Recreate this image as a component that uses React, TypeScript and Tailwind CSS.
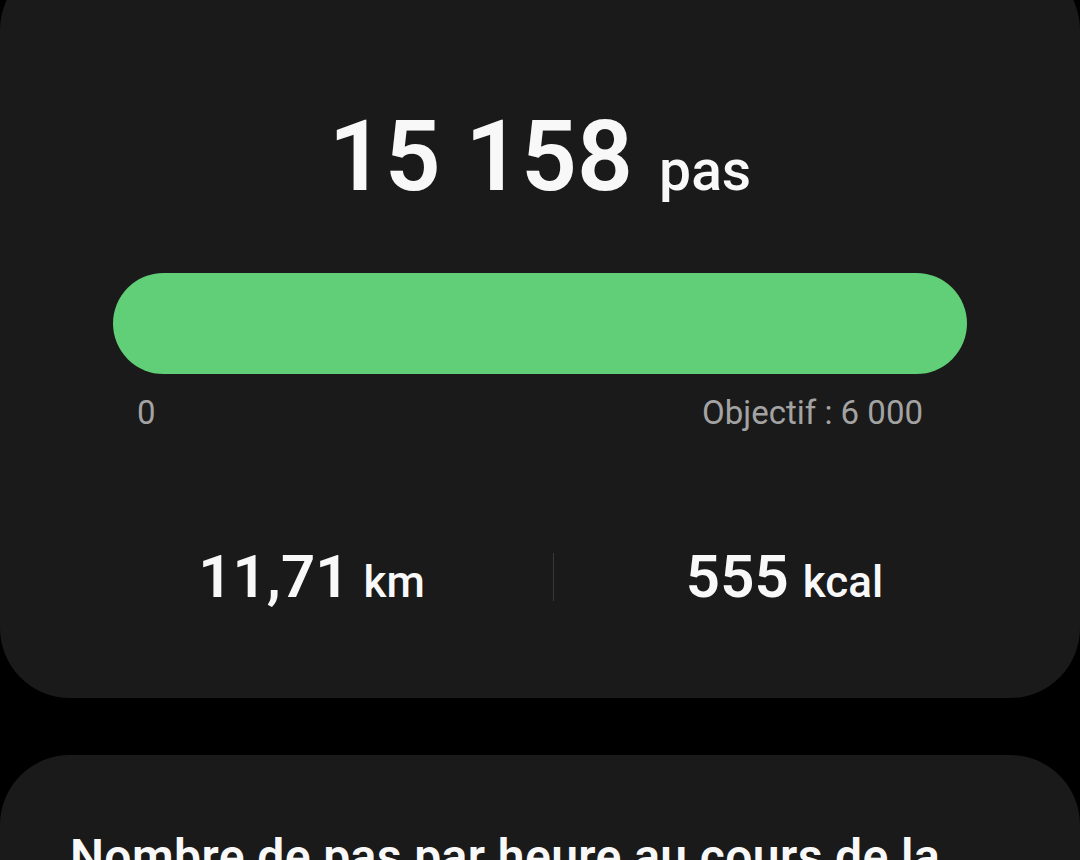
export default function App() {
  return (
    <div className="h-[860px] w-[1080px] overflow-hidden bg-black font-['Roboto',sans-serif] text-[#f8f8f8]">
      <div className="-mt-[40px] flex h-[738px] flex-col rounded-[70px] bg-[#1a1a1a]">
        <div className="mt-[148px] flex items-baseline justify-center leading-none">
          <span className="text-[98px] font-semibold">15 158</span>
          <span className="ml-[26px] text-[57px] font-medium">pas</span>
        </div>

        <div className="mx-[113px] mt-[67px] h-[101px] rounded-full bg-[#61ce78]" />

        <div className="mt-[22px] flex justify-between pl-[137px] pr-[157px] text-[33px] leading-none text-[#a3a3a3]">
          <span>0</span>
          <span>Objectif : 6 000</span>
        </div>

        <div className="mt-[118px] flex items-center pl-[70px]">
          <div className="flex w-[483px] items-baseline justify-center leading-none">
            <span className="text-[60px] font-semibold">11,71</span>
            <span className="ml-[14px] text-[44px] font-medium">km</span>
          </div>
          <div className="h-[48px] w-px bg-[#383838]" />
          <div className="flex w-[461px] items-baseline justify-center leading-none">
            <span className="text-[60px] font-semibold">555</span>
            <span className="ml-[14px] text-[44px] font-medium">kcal</span>
          </div>
        </div>
      </div>

      <div className="mt-[57px] h-[300px] rounded-t-[70px] bg-[#1a1a1a] px-[70px] pt-[78px]">
        <h2 className="text-[48px] font-semibold leading-none tracking-[0.4px]">
          Nombre de pas par heure au cours de la journée
        </h2>
      </div>
    </div>
  )
}
